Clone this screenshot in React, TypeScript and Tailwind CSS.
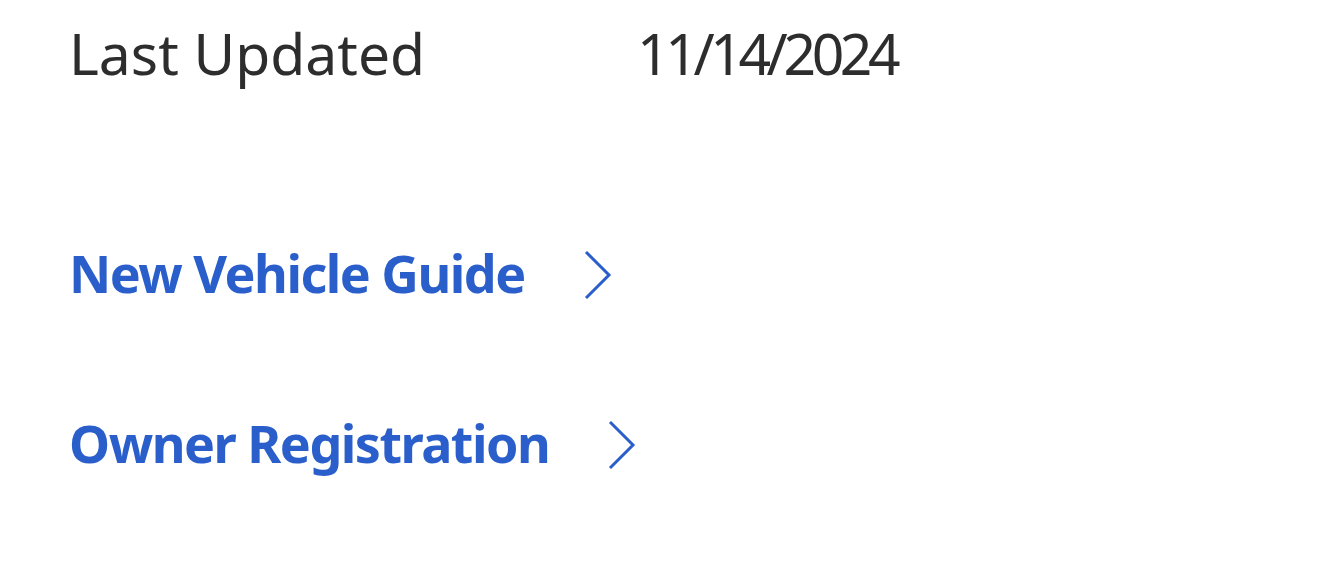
const LINKS = ['New Vehicle Guide', 'Owner Registration']

export default function App() {
  return (
    <div className="w-[1320px] h-[575px] bg-white px-[69px] pt-[18px] font-['Noto_Sans',sans-serif]">
      <div className="flex items-baseline text-[57px] leading-[70px] text-[#2d2d2d]">
        <span className="w-[568px]">Last Updated</span>
        <span className="tracking-[-4.4px]">11/14/2024</span>
      </div>
      <div className="mt-[150px] flex flex-col gap-[100px]">
        {LINKS.map((l) => (
          <a key={l} href="#" className="flex items-center gap-[58px] text-[52px] leading-[70px] font-bold text-[#2a5fcb] tracking-[-1.5px]">
            <span>{l}</span>
            <svg width="30" height="50" viewBox="0 0 30 50" fill="none" stroke="#2a5fcb" strokeWidth="3" className="mt-[4px]">
              <path d="M3 2 L26 25 L3 48" />
            </svg>
          </a>
        ))}
      </div>
    </div>
  )
}
